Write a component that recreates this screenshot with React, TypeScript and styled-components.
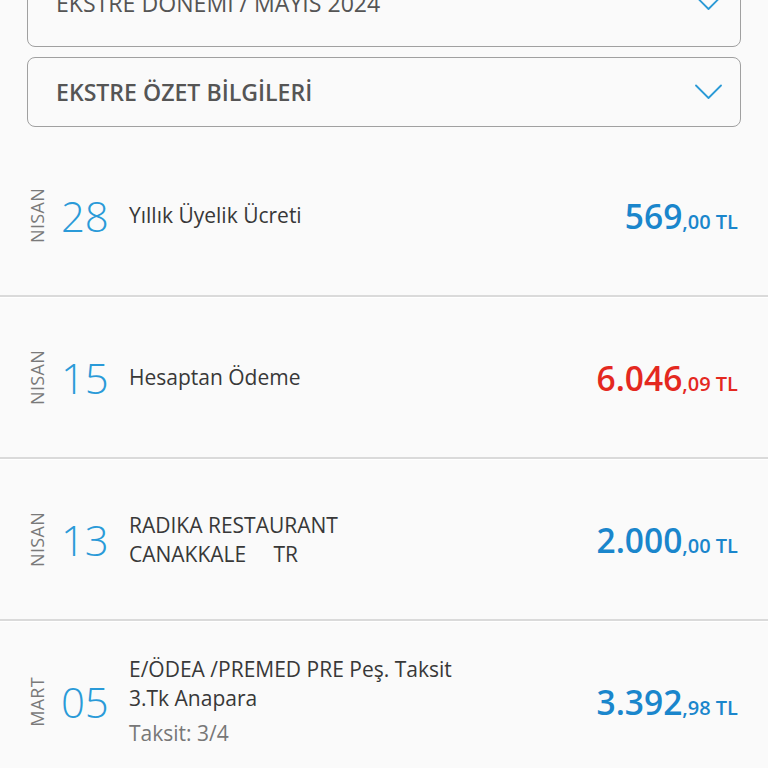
import React from "react";
import styled, { createGlobalStyle } from "styled-components";

const Global = createGlobalStyle`
  html, body { margin: 0; padding: 0; background: #fafafa; }
  body { font-family: "Open Sans", "Noto Sans", sans-serif; overflow: hidden; }
`;

const Page = styled.div`
  width: 768px;
  height: 768px;
  overflow: hidden;
  background: #fafafa;
`;

const Boxes = styled.div`
  display: flex;
  flex-direction: column;
  gap: 10px;
  padding: 0 27px 0 27px;
  margin-top: -41px;
`;

const Box = styled.div<{ $tall?: boolean }>`
  height: ${(p) => (p.$tall ? 86 : 68)}px;
  border: 1px solid #a0a0a0;
  border-radius: 8px;
  display: flex;
  align-items: center;
  justify-content: space-between;
  padding: 0 18px 0 28px;
  background: #fafafa;
`;

const BoxTitle = styled.span<{ $bold?: boolean }>`
  font-size: 23.1px;
  font-weight: ${(p) => (p.$bold ? 600 : 400)};
  color: #555;
  letter-spacing: 0px;
`;

const Chevron = () => (
  <svg width="27" height="16" viewBox="0 0 27 16" fill="none">
    <path d="M1 1.5 L13.5 14 L26 1.5" stroke="#2b9ad6" strokeWidth="1.8" strokeLinecap="round" strokeLinejoin="round" />
  </svg>
);

const List = styled.div`
  margin-top: 9px;
  display: flex;
  flex-direction: column;
`;

const Row = styled.div`
  height: 159px;
  display: flex;
  align-items: center;
  padding: 0 30px 0 27px;
  border-bottom: 2px solid #dadada;
  box-shadow: 0 1px 0 #ffffff;
  margin-bottom: 1px;
`;

const Month = styled.div`
  width: 20px;
  writing-mode: vertical-rl;
  transform: rotate(180deg);
  font-size: 18px;
  color: #7a7a7a;
  letter-spacing: 0.3px;
  text-align: center;
  line-height: 20px;
`;

const Day = styled.div`
  width: 68px;
  padding-left: 14px;
  font-size: 42px;
  font-weight: 300;
  color: #2a9ad8;
  line-height: 1;
  letter-spacing: -0.3px;
`;

const Desc = styled.div`
  flex: 1;
  display: flex;
  flex-direction: column;
  font-size: 21px;
  color: #383838;
  line-height: 29px;
`;

const Sub = styled.span`
  color: #777;
  margin-top: 6px;
`;

const Amount = styled.div<{ $red?: boolean }>`
  color: ${(p) => (p.$red ? "#e4281f" : "#1a86cc")};
  white-space: nowrap;
  font-weight: 600;
`;

const Big = styled.span`
  font-size: 33.5px;
`;

const Small = styled.span`
  font-size: 20px;
`;

type Item = {
  month: string;
  day: string;
  lines: string[];
  sub?: string;
  big: string;
  small: string;
  red?: boolean;
};

const items: Item[] = [
  { month: "NISAN", day: "28", lines: ["Yıllık Üyelik Ücreti"], big: "569", small: ",00 TL" },
  { month: "NISAN", day: "15", lines: ["Hesaptan Ödeme"], big: "6.046", small: ",09 TL", red: true },
  { month: "NISAN", day: "13", lines: ["RADIKA RESTAURANT", "CANAKKALE\u00a0\u00a0\u00a0\u00a0\u00a0TR"], big: "2.000", small: ",00 TL" },
  { month: "MART", day: "05", lines: ["E/ÖDEA /PREMED PRE Peş. Taksit", "3.Tk Anapara"], sub: "Taksit: 3/4", big: "3.392", small: ",98 TL" },
];

export default function App() {
  return (
    <Page>
      <Global />
      <Boxes>
        <Box $tall>
          <BoxTitle>EKSTRE DÖNEMİ / MAYIS 2024</BoxTitle>
          <Chevron />
        </Box>
        <Box>
          <BoxTitle $bold>EKSTRE ÖZET BİLGİLERİ</BoxTitle>
          <Chevron />
        </Box>
      </Boxes>
      <List>
        {items.map((it, i) => (
          <Row key={i}>
            <Month>{it.month}</Month>
            <Day>{it.day}</Day>
            <Desc>
              {it.lines.map((l, j) => (
                <span key={j}>{l}</span>
              ))}
              {it.sub && <Sub>{it.sub}</Sub>}
            </Desc>
            <Amount $red={it.red}>
              <Big>{it.big}</Big>
              <Small>{it.small}</Small>
            </Amount>
          </Row>
        ))}
      </List>
    </Page>
  );
}
